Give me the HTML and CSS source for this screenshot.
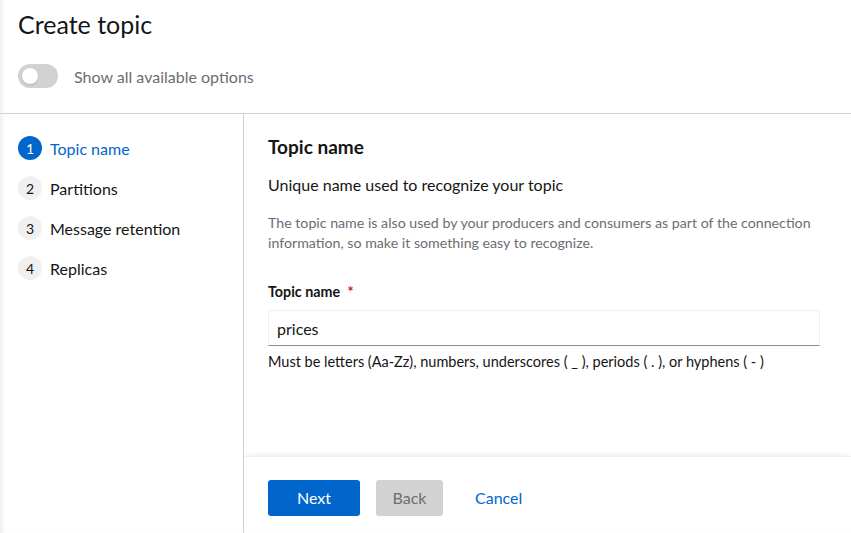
FILE: index.html
```html
<!DOCTYPE html>
<html lang="en">
<head>
<meta charset="utf-8">
<title>Create topic</title>
<link rel="stylesheet" href="styles.css">
</head>
<body>
<div class="page">
  <header class="page-header">
    <h1 class="title">Create topic</h1>
    <label class="switch">
      <span class="switch-track"><span class="switch-knob"></span></span>
      <span class="switch-label">Show all available options</span>
    </label>
  </header>
  <div class="wizard">
    <nav class="wizard-nav">
      <ol class="steps">
        <li class="step current"><span class="step-num">1</span><span class="step-text">Topic name</span></li>
        <li class="step"><span class="step-num">2</span><span class="step-text">Partitions</span></li>
        <li class="step"><span class="step-num">3</span><span class="step-text">Message retention</span></li>
        <li class="step"><span class="step-num">4</span><span class="step-text">Replicas</span></li>
      </ol>
    </nav>
    <section class="wizard-main">
      <div class="wizard-body">
        <h2 class="section-title">Topic name</h2>
        <p class="lead">Unique name used to recognize your topic</p>
        <p class="desc">The topic name is also used by your producers and consumers as part of the connection information, so make it something easy to recognize.</p>
        <div class="field">
          <label class="field-label" for="topic">Topic name <span class="req">*</span></label>
          <input id="topic" class="text-input" type="text" value="prices">
          <div class="helper">Must be letters (Aa-Zz), numbers, underscores ( _ ), periods ( . ), or hyphens ( - )</div>
        </div>
      </div>
      <footer class="wizard-footer">
        <button class="btn btn-primary">Next</button>
        <button class="btn btn-disabled" disabled>Back</button>
        <button class="btn btn-link">Cancel</button>
      </footer>
    </section>
  </div>
</div>
</body>
</html>
```
FILE: styles.css
```css
* { box-sizing: border-box; }
html, body { margin: 0; padding: 0; height: 100%; }
body {
  font-family: "Lato", "Liberation Sans", sans-serif;
  color: #151515;
  background: #fff;
}
.page {
  height: 533px;
  display: flex;
  flex-direction: column;
  box-shadow: inset 5px 0 5px -3px rgba(0,0,0,0.08);
}
.page-header {
  padding: 8px 18px 0 18px;
  height: 114px;
  border-bottom: 1px solid #d2d2d2;
}
.title {
  margin: 0;
  font-size: 25px;
  font-weight: 400;
  line-height: 32px;
  height: 32px;
}
.switch {
  display: flex;
  align-items: center;
  gap: 16px;
  margin-top: 24px;
}
.switch-track {
  width: 40px;
  height: 24px;
  border-radius: 12px;
  background: #d2d2d2;
  position: relative;
  flex: none;
}
.switch-knob {
  position: absolute;
  left: 4px;
  top: 4px;
  width: 16px;
  height: 16px;
  border-radius: 50%;
  background: #fff;
  box-shadow: 0 1px 2px rgba(0,0,0,0.15);
}
.switch-label {
  font-size: 16px;
  color: #6a6e73;
}
.wizard {
  flex: 1;
  display: flex;
  min-height: 0;
}
.wizard-nav {
  width: 244px;
  flex: none;
  border-right: 1px solid #d2d2d2;
  padding: 22px 18px;
}
.steps {
  list-style: none;
  margin: 0;
  padding: 0;
  display: flex;
  flex-direction: column;
  gap: 16px;
}
.step {
  display: flex;
  align-items: center;
  gap: 8px;
  height: 24px;
  font-size: 16px;
  color: #151515;
}
.step-num {
  width: 24px;
  height: 24px;
  border-radius: 50%;
  background: #f0f0f0;
  display: flex;
  align-items: center;
  justify-content: center;
  font-size: 14px;
  color: #151515;
}
.step.current .step-num { background: #0066cc; color: #fff; }
.step.current .step-text { color: #0066cc; }
.wizard-main {
  flex: 1;
  display: flex;
  flex-direction: column;
  min-width: 0;
}
.wizard-body {
  flex: 1;
  padding: 20px 31px 0 24px;
}
.section-title {
  margin: 0;
  font-size: 19px;
  font-weight: 700;
  line-height: 26px;
}
.lead {
  margin: 13px 0 0 0;
  font-size: 16px;
  line-height: 24px;
}
.desc {
  margin: 16px 0 0 0;
  font-size: 14.2px;
  line-height: 20px;
  color: #6a6e73;
}
.field { margin-top: 29px; }
.field-label {
  display: block;
  font-size: 14.3px;
  font-weight: 700;
  line-height: 20px;
}
.req { color: #c9190b; margin-left: 4px; }
.text-input {
  display: block;
  width: 100%;
  margin-top: 8px;
  height: 36px;
  padding: 6px 8px;
  font-family: inherit;
  font-size: 16px;
  color: #151515;
  border: 1px solid #f0f0f0;
  border-bottom-color: #8a8d90;
  background: #fff;
  outline: none;
}
.helper {
  margin-top: 6px;
  font-size: 14.5px;
  line-height: 20px;
}
.wizard-footer {
  height: 77px;
  padding: 23px 24px 16px 24px;
  display: flex;
  align-items: flex-start;
  gap: 16px;
  box-shadow: 0 -4px 6px -3px rgba(0,0,0,0.08);
  border-top: 1px solid #f0f0f0;
}
.btn {
  height: 36px;
  padding: 0 16px 2px 16px;
  font-family: inherit;
  font-size: 16px;
  border: none;
  border-radius: 3px;
  cursor: pointer;
}
.btn-primary { background: #0066cc; color: #fff; width: 92px; }
.btn-disabled { background: #d2d2d2; color: #6a6e73; width: 67px; }
.btn-link { background: transparent; color: #0066cc; }
```
